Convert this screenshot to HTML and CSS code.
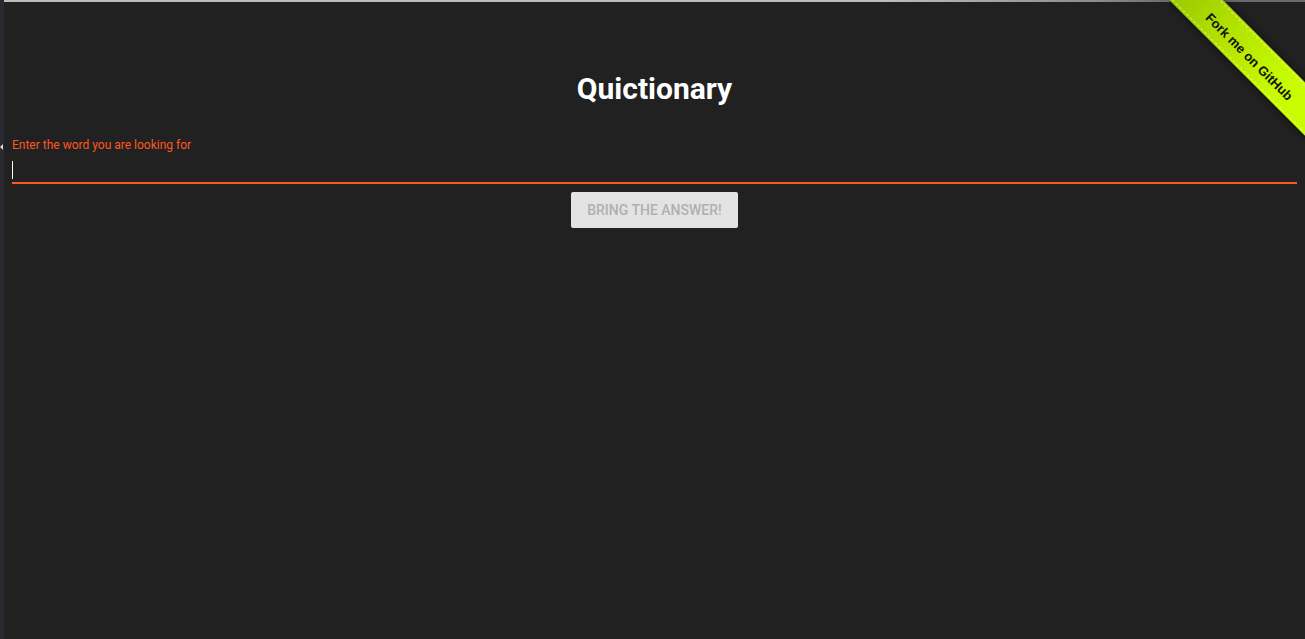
FILE: index.html
```html
<!DOCTYPE html>
<html lang="en">
<head>
<meta charset="utf-8">
<title>Quictionary</title>
<link rel="stylesheet" href="styles.css">
</head>
<body>
<div class="app">
  <div class="sidebar"><span class="sidebar-arrow"></span></div>
  <main class="main">
    <h1 class="title">Quictionary</h1>
    <form class="search">
      <label class="field-label" for="word">Enter the word you are looking for</label>
      <div class="field" id="word" role="textbox" tabindex="0"><span class="caret"></span></div>
      <div class="actions">
        <button type="button" class="answer-btn" disabled>Bring the answer!</button>
      </div>
    </form>
  </main>
  <div class="ribbon-wrap">
    <a class="ribbon" href="#">Fork me on GitHub</a>
  </div>
</div>
</body>
</html>
```

FILE: styles.css
```css
html, body {
  margin: 0;
  padding: 0;
  height: 100%;
  background: #212121;
}

.app {
  display: flex;
  min-height: 100vh;
  position: relative;
  overflow: hidden;
  font-family: Roboto, "Liberation Sans", sans-serif;
}

.sidebar {
  width: 4px;
  flex: none;
  background: #2b2930;
  position: relative;
}

.sidebar-arrow {
  position: absolute;
  left: 0;
  top: 144px;
  width: 0;
  height: 0;
  border-top: 3px solid transparent;
  border-bottom: 3px solid transparent;
  border-right: 3px solid #d8d8d8;
}

.main {
  flex: 1;
  padding: 2px 8px 0;
  background:
    linear-gradient(to right, #bdbdbd 0, #bdbdbd 880px, #8a8a8a 1100px, #6a6a6a 1165px) top left / 100% 2px no-repeat,
    #212121;
}

.title {
  margin: 69px 0 0;
  font-size: 30px;
  line-height: 36px;
  font-weight: 700;
  color: #ffffff;
  text-align: center;
}

.search {
  display: flex;
  flex-direction: column;
  margin-top: 31px;
}

.field-label {
  font-size: 12px;
  line-height: 14px;
  color: #ff5722;
}

.field {
  margin-top: 0;
  height: 30px;
  border-bottom: 2px solid #ff5722;
  box-sizing: content-box;
}

.caret {
  display: block;
  margin-top: 9px;
  width: 1px;
  height: 18px;
  background: #ffffff;
}

.actions {
  display: flex;
  justify-content: center;
  margin-top: 8px;
}

.answer-btn {
  height: 36px;
  padding: 0 16px;
  border: none;
  border-radius: 2px;
  background: #e3e3e3;
  color: #b0b0b0;
  font-family: Roboto, "Liberation Sans", sans-serif;
  font-size: 14px;
  font-weight: 500;
  text-transform: uppercase;
  letter-spacing: 0;
}

.ribbon-wrap {
  position: absolute;
  top: 0;
  right: 0;
  width: 136px;
  height: 140px;
  overflow: hidden;
}

.ribbon {
  position: absolute;
  left: -28px;
  top: 36px;
  width: 220px;
  height: 38px;
  padding-top: 9px;
  padding-right: 0;
  transform: rotate(45deg);
  background: linear-gradient(to right, #98c400 0%, #b6e600 40%, #c8fb00 70%, #ccff00 100%);
  box-shadow: 0 0 8px rgba(0, 0, 0, 0.6);
  color: #111111;
  text-align: center;
  text-decoration: none;
  font-family: "Liberation Sans", Arial, sans-serif;
  font-size: 13px;
  font-weight: 700;
  box-sizing: border-box;
  line-height: 26px;
}

.ribbon::before {
  content: "";
  position: absolute;
  left: 0;
  right: 0;
  top: 2px;
  bottom: 2px;
  border-top: 1px dashed rgba(255, 255, 255, 0.45);
  border-bottom: 1px dashed rgba(255, 255, 255, 0.45);
}
```
